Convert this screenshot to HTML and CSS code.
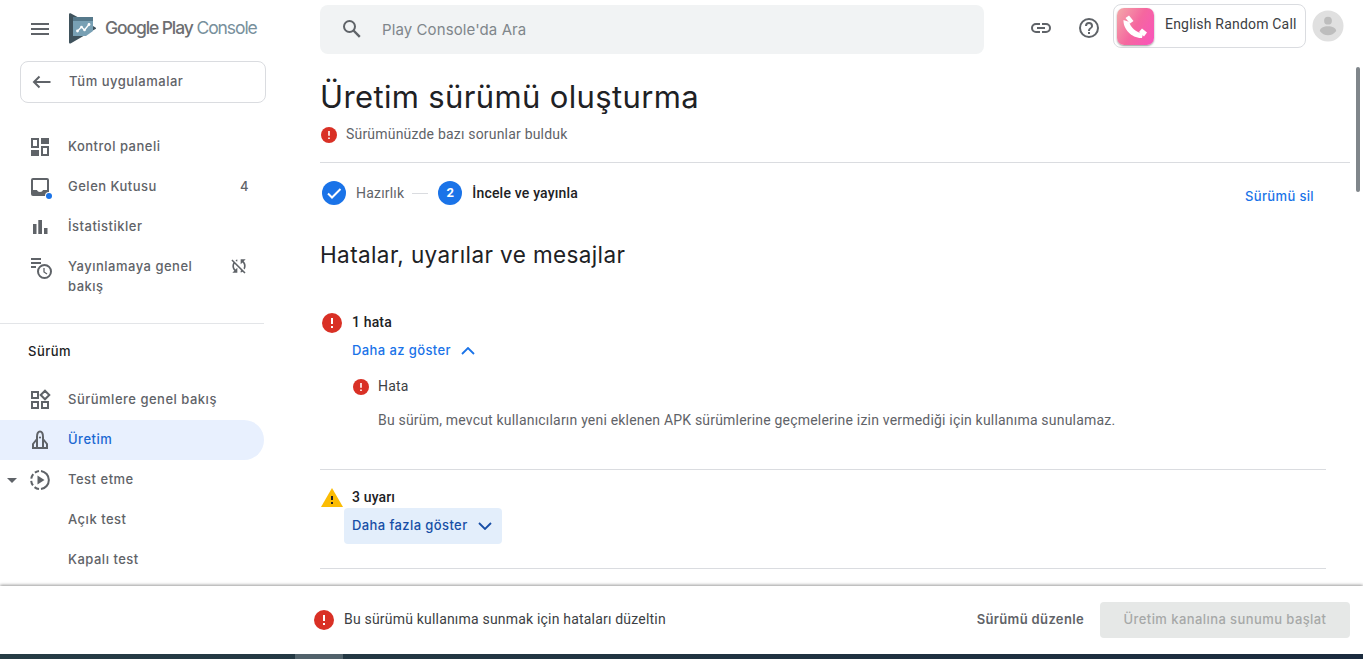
FILE: index.html
```html
<!DOCTYPE html>
<html lang="tr">
<head>
<meta charset="utf-8">
<title>Google Play Console</title>
<link rel="stylesheet" href="styles.css">
</head>
<body>
<svg class="defs" aria-hidden="true">
  <symbol id="error" viewBox="2 2 20 20"><circle cx="12" cy="12" r="10" fill="#d93025"/><path d="M11 7h2v6h-2zM11 15h2v2h-2z" fill="#fff"/></symbol>
</svg>
<div class="app">
  <aside class="sidebar">
    <div class="brand">
      <svg class="menu" width="24" height="24" viewBox="0 0 24 24"><path d="M3 6h18v2H3zM3 11h18v2H3zM3 16h18v2H3z" fill="#5f6368"/></svg>
      <svg class="logo" width="28" height="31" viewBox="0 0 28 31">
        <path d="M0 1.500C0 .3 1 0 2 .5L8.500 4H24v9l2.500 1.500c.8.500.8 1 0 1.500L2 30.300c-1 .5-2 .2-2-1z" fill="#3f525c"/>
        <path d="M4 4h20v14l-7 5H4z" fill="#78a0b4"/><path d="M4 4h20v4H4z" fill="#56798b"/>
        <path d="M8.500 18l4-4 3 3 4.500-5.500" fill="none" stroke="#fff" stroke-width="1.300"/><g fill="#fff"><circle cx="8.500" cy="18" r="1.400"/><circle cx="12.500" cy="14" r="1.300"/><circle cx="15.500" cy="17" r="1.300"/><circle cx="20" cy="11.500" r="1.400"/></g>
      </svg>
      <span class="wordmark"><span class="gp">Google Play</span> <span class="console">Console</span></span>
    </div>
    <a class="all-apps">
      <svg width="20" height="14" viewBox="0 0 20 14"><path d="M18.500 7H2M7.500 1.500L2 7l5.500 5.500" fill="none" stroke="#5f6368" stroke-width="2"/></svg>
      <span>Tüm uygulamalar</span>
    </a>
    <nav class="nav">
      <a class="item"><svg class="ico" viewBox="0 0 24 24"><path fill-rule="evenodd" d="M3 3h8v10H3zM5 5v6h4V5zM13 3h8v6h-8zM3 15h8v6H3zM13 11h8v10h-8zM15 13v6h4v-6z"/></svg><span class="label">Kontrol paneli</span></a>
      <a class="item"><svg class="ico" viewBox="0 0 24 24"><path fill-rule="evenodd" d="M5 3h14a2 2 0 0 1 2 2v14a2 2 0 0 1-2 2H5a2 2 0 0 1-2-2V5a2 2 0 0 1 2-2zM5 5v10h4c.3 1.300 1.500 2 3 2s2.700-.7 3-2h4V5z"/><circle cx="21" cy="21" r="4" fill="#fff"/><circle cx="21" cy="21" r="3" fill="#1a73e8"/></svg><span class="label">Gelen Kutusu</span><span class="count">4</span></a>
      <a class="item"><svg class="ico" viewBox="0 0 24 24"><path d="M5 9h3.500v10H5zM10.300 5h3.700v14h-3.700zM16 13h3.500v6H16z"/></svg><span class="label">İstatistikler</span></a>
      <a class="item tall"><svg class="ico" viewBox="0 0 24 24"><path d="M3 1h10v2H3zM3 5h10v2H3zM3 9h5v2H3z"/><circle cx="16.500" cy="14.500" r="6.500" fill="none" stroke="#5f6368" stroke-width="2"/><path d="M16 11v4l3 2" fill="none" stroke="#5f6368" stroke-width="1.300"/></svg><span class="label">Yayınlamaya genel bakış</span>
        <svg class="sync" width="20" height="20" viewBox="0 0 24 24"><path fill="#5f6368" d="M10 6.350V4.260c-.8.210-1.550.540-2.230.960l1.460 1.460c.25-.12.5-.24.77-.33zm-7.140-.94l2.360 2.360C4.450 8.990 4 10.440 4 12c0 2.210.91 4.200 2.360 5.640L4 20h6v-6l-2.240 2.240C6.680 15.150 6 13.660 6 12c0-1 .25-1.940.68-2.770l8.080 8.080c-.25.130-.5.250-.77.340v2.090c.8-.21 1.550-.54 2.230-.96l2.360 2.360 1.270-1.270L4.140 4.140 2.860 5.410zM20 4h-6v6l2.240-2.240C17.320 8.850 18 10.340 18 12c0 1-.25 1.940-.68 2.770l1.460 1.460C19.550 15.010 20 13.560 20 12c0-2.210-.91-4.200-2.360-5.640L20 4z"/></svg></a>
      <hr class="rule">
      <div class="section">Sürüm</div>
      <a class="item"><svg class="ico" viewBox="0 0 24 24"><path d="M4 4h6v6H4zM4 14h6v6H4zM14 14h6v6h-6zM17 2.700L21.300 7 17 11.300 12.700 7z" fill="none" stroke="#5f6368" stroke-width="2"/></svg><span class="label">Sürümlere genel bakış</span></a>
      <a class="item active"><svg class="ico" viewBox="0 0 24 24"><path d="M9 20V9c0-3 1-5.500 3-5.500S15 6 15 9v11M9 11l-4 5v4h14v-4l-4-5" fill="none" stroke="#5f6368" stroke-width="2"/><circle cx="12" cy="9.500" r="1.100"/></svg><span class="label">Üretim</span></a>
      <a class="item"><svg class="caret" width="10" height="5" viewBox="0 0 10 5"><path d="M0 0h10L5 5z" fill="#5f6368"/></svg><svg class="ico" viewBox="0 0 24 24"><path d="M13 2.900a9.200 9.200 0 0 1 0 18.200" fill="none" stroke="#5f6368" stroke-width="2"/><path d="M11 21.100A9.200 9.200 0 0 1 11 2.900" fill="none" stroke="#5f6368" stroke-width="2" stroke-dasharray="4.900 2.300"/><path d="M9.500 7.500v9l7-4.500z"/></svg><span class="label">Test etme</span></a>
      <a class="item sub"><span class="label">Açık test</span></a>
      <a class="item sub"><span class="label">Kapalı test</span></a>
    </nav>
  </aside>
  <main class="main">
    <header class="topbar">
      <div class="search"><svg width="20" height="20" viewBox="0 0 20 20"><circle cx="7.500" cy="7.500" r="5.500" fill="none" stroke="#5f6368" stroke-width="2"/><path d="M11.500 11.500l6.300 6.300" stroke="#5f6368" stroke-width="2.400"/></svg><span>Play Console'da Ara</span></div>
      <svg class="link" width="24" height="24" viewBox="0 0 24 24"><path d="M11 8H7a4 4 0 0 0 0 8h4M13 8h4a4 4 0 0 1 0 8h-4M8 12h8" fill="none" stroke="#5f6368" stroke-width="2"/></svg>
      <svg class="help" width="24" height="24" viewBox="0 0 24 24"><path fill="#5f6368" d="M11 18h2v-2h-2v2zm1-16a10 10 0 1 0 0 20 10 10 0 0 0 0-20zm0 18a8 8 0 1 1 0-16 8 8 0 0 1 0 16zm0-14a4 4 0 0 0-4 4h2a2 2 0 1 1 4 0c0 2-3 1.750-3 5h2c0-2.250 3-2.500 3-5a4 4 0 0 0-4-4z"/></svg>
      <div class="chip"><div class="app-icon"><svg width="26" height="26" viewBox="0 0 26 26"><path d="M1.500 6C1 15 10 24.500 20 24l1-4.500C14 18.500 8 13 7.500 8z" fill="#fff"/><path d="M3.500 4l3.500-2.500 4.500 5.500L8 9.500zM17 18l3-3.500 5 4-3 4z" fill="#fff"/></svg></div><span>English Random Call</span></div>
      <svg class="avatar" width="32" height="32" viewBox="0 0 32 32"><circle cx="16" cy="16" r="15.500" fill="#e0e0e0"/><circle cx="16" cy="10.700" r="3.900" fill="#bdbdbd"/><path d="M7.800 21c0-3 4-4.800 8.200-4.800s8.200 1.800 8.200 4.800c-2 2.800-5 4.200-8.200 4.200S9.800 23.800 7.800 21z" fill="#bdbdbd"/></svg>
    </header>
    <div class="page-head">
      <h1>Üretim sürümü oluşturma</h1>
      <p><svg width="16" height="16"><use href="#error"/></svg><span>Sürümünüzde bazı sorunlar bulduk</span></p>
    </div>
    <div class="stepper">
      <svg width="24" height="24" viewBox="0 0 24 24"><circle cx="12" cy="12" r="12" fill="#1a73e8"/><path d="M6 12.500l4 4 8.500-8.500" fill="none" stroke="#fff" stroke-width="2"/></svg>
      <span class="done">Hazırlık</span><i class="dash"></i><b class="num">2</b><span class="current">İncele ve yayınla</span>
      <a class="delete">Sürümü sil</a>
    </div>
    <h2>Hatalar, uyarılar ve mesajlar</h2>
    <section class="group errors">
      <svg class="mark" width="20" height="20"><use href="#error"/></svg>
      <div class="body">
        <div class="head">1 hata</div>
        <a class="toggle less">Daha az göster<svg width="14" height="8" viewBox="0 0 14 8"><path d="M1 7l6-6 6 6" fill="none" stroke="currentColor" stroke-width="1.800"/></svg></a>
        <div class="entry"><svg width="16" height="16"><use href="#error"/></svg><span>Hata</span></div>
        <p class="detail">Bu sürüm, mevcut kullanıcıların yeni eklenen APK sürümlerine geçmelerine izin vermediği için kullanıma sunulamaz.</p>
      </div>
    </section>
    <section class="group warnings">
      <svg class="mark" width="22" height="19" viewBox="0 0 22 19"><path d="M11 0l11 19H0z" fill="#fbbc04"/><path d="M10 8h2v4h-2zM10 14h2v2h-2z" fill="#202124"/></svg>
      <div class="body">
        <div class="head">3 uyarı</div>
        <a class="toggle more">Daha fazla göster<svg width="14" height="8" viewBox="0 0 14 8"><path d="M1 1l6 6 6-6" fill="none" stroke="currentColor" stroke-width="1.800"/></svg></a>
      </div>
    </section>
    <div class="scroll-thumb"></div>
  </main>
</div>
<footer class="actions">
  <svg width="20" height="20"><use href="#error"/></svg>
  <span class="msg">Bu sürümü kullanıma sunmak için hataları düzeltin</span>
  <a class="edit">Sürümü düzenle</a>
  <div class="start"><span>Üretim kanalına sunumu başlat</span></div>
</footer>
<div class="taskbar"><i></i></div>
</body>
</html>
```

FILE: styles.css
```css
* { box-sizing: border-box; }
body { margin: 0; width: 1363px; height: 659px; overflow: hidden; background: #fff; color: #202124; font: 14px/20px Roboto, sans-serif; letter-spacing: .195px; display: flex; flex-direction: column; }
h1, h2, p { margin: 0; font-weight: 400; }
svg { display: block; flex: none; }
span, a { white-space: nowrap; }
.defs { display: none; }
.app { display: flex; height: 586px; overflow: hidden; flex: none; }

.sidebar { width: 320px; flex: none; color: #5f6368; font-family: Inter, sans-serif; font-weight: 500; font-size: 13px; letter-spacing: .5px; }
.brand { height: 61px; display: flex; align-items: flex-start; padding: 13px 0 0 28px; }
.brand .menu { margin-top: 4px; }
.brand .logo { margin-left: 17px; }
.wordmark { margin: 3px 0 0 8px; font: 400 17.500px/24px Inter, sans-serif; letter-spacing: -1.100px; }
.gp { color: #6d6e71; font-weight: 500; }
.console { color: #78909c; }
.all-apps { width: 246px; height: 42px; margin-left: 20px; padding: 0 0 1px 11px; border: 1px solid #dadce0; border-radius: 8px; display: flex; align-items: center; gap: 17px; }
.all-apps span { padding-bottom: 2px; letter-spacing: .5px; }
.nav { padding-top: 24px; }
.item { width: 264px; height: 40px; padding-left: 28px; display: flex; align-items: center; position: relative; }
.ico { width: 24px; height: 24px; overflow: visible; fill: #5f6368; }
.label { margin: 0 0 2px 16px; }
.count { margin: 0 15px 2px auto; }
.tall { height: 60px; align-items: flex-start; padding-top: 10px; }
.tall .label { width: 130px; white-space: normal; margin-top: -1px; }
.sync { margin: -1px 15px 0 auto; }
.rule { width: 264px; height: 1px; margin: 16px 0 0; border: 0; background: #e3e5e8; }
.section { margin: 17px 0 19px 28px; color: #202124; }
.active { background: #e8f0fe; border-radius: 0 20px 20px 0; }
.active .label { color: #1967d2; }
.caret { position: absolute; left: 7px; top: 18px; }
.sub { padding-left: 52px; }

.main { width: 1043px; position: relative; }
.topbar { height: 54px; display: flex; align-items: flex-start; }
.search { width: 664px; height: 49px; margin-top: 5px; padding: 0 0 2px 22px; background: #f1f3f4; border-radius: 8px; display: flex; align-items: center; gap: 20px; color: #80868b; font: 15px/20px Inter, sans-serif; letter-spacing: .1px; }
.search span { padding-top: 2px; }
.link { margin: 16px 0 0 45px; }
.help { margin: 16px 0 0 24px; }
.chip { width: 193px; height: 44px; margin: 4px 0 0 12px; padding: 3px 2.500px; border: 1px solid #dadce0; border-radius: 8px; display: flex; color: #3c4043; }
.chip span { margin: 6px 0 0 11.500px; }
.app-icon { width: 37px; height: 37px; border-radius: 7px; display: grid; place-items: center; background: linear-gradient(120deg, #f3aaa9, #f5679f 50%, #f953bd); box-shadow: 0 1px 2px #0006; }
.avatar { margin: 10px 0 0 6px; }
.page-head { width: 1030px; height: 109px; border-bottom: 1px solid #dadce0; }
h1 { padding-top: 23px; font: 400 31px/40px Inter, sans-serif; letter-spacing: .36px; }
.page-head p { display: flex; align-items: center; gap: 9px; margin-top: 7px; padding-left: 1px; color: #5f6368; }
.page-head p svg, .entry svg { margin-top: 2px; }
.stepper { height: 60px; padding-left: 2px; display: flex; align-items: center; }
.done { margin-left: 10px; color: #5f6368; }
.dash { width: 16px; height: 1px; margin: 0 10px 0 8px; background: #dadce0; }
.num { width: 24px; height: 24px; border-radius: 50%; background: #1a73e8; color: #fff; text-align: center; font: 700 13px/24px Roboto, sans-serif; }
.current { margin-left: 10px; font-weight: 500; letter-spacing: .19px; }
.delete { margin: 6px 49px 0 auto; font: 500 13px/20px Inter, sans-serif; letter-spacing: .35px; color: #1a73e8; }
h2 { margin-top: 16px; font: 400 22.500px/32px Inter, sans-serif; letter-spacing: .39px; }
.group { display: flex; width: 1006px; border-bottom: 1px solid #dadce0; }
.group .head { font-weight: 500; height: 20px; letter-spacing: .15px; }
.errors { height: 199px; padding: 41px 0 0 2px; }
.errors .mark { margin-top: 1px; }
.errors .body { margin-left: 10px; }
.toggle { display: flex; align-items: center; font: 500 13px/20px Inter, sans-serif; letter-spacing: .4px; }
.less { margin-top: 8px; color: #1a73e8; gap: 10px; }
.less svg { margin-top: 2px; }
.entry { display: flex; align-items: center; gap: 9px; margin: 16px 0 14px 1px; color: #3c4043; }
.detail { padding-left: 26px; color: #5f6368; }
.warnings { height: 99px; padding: 17px 0 0 1px; }
.warnings .mark { margin-top: 1px; }
.warnings .body { margin-left: 1px; }
.warnings .head { padding-left: 8px; height: 21px; }
.more { width: 158px; height: 36px; padding: 0 10px 2px 8px; justify-content: space-between; border-radius: 4px; background: #e3eefb; color: #174ea6; }
.more svg { margin-top: 2px; }
.scroll-thumb { position: absolute; left: 1036px; top: 67px; width: 4px; height: 125px; border-radius: 2px; background: #80868b; }

.actions { height: 68px; flex: none; position: relative; padding-left: 314px; display: flex; align-items: center; background: #fff; box-shadow: 0 -1px 3px #0006; clip-path: inset(-6px 0 0 0); }
.msg { margin-left: 10px; color: #3c4043; padding-bottom: 2px; }
.edit { margin: 0 16px 2px auto; font: 600 13px/20px Inter, sans-serif; letter-spacing: .35px; color: #5f6368; }
.start { width: 250px; height: 36px; margin-right: 13px; background: #e6e8e7; border-radius: 4px; color: #a6a8a8; font: 500 13px/34px Inter, sans-serif; letter-spacing: .42px; text-align: center; }
.taskbar { height: 5px; flex: none; background: linear-gradient(90deg, #263c45, #1b2b3e); }
.taskbar i { display: block; width: 48px; height: 5px; margin-left: 295px; background: #51626b; }
```
